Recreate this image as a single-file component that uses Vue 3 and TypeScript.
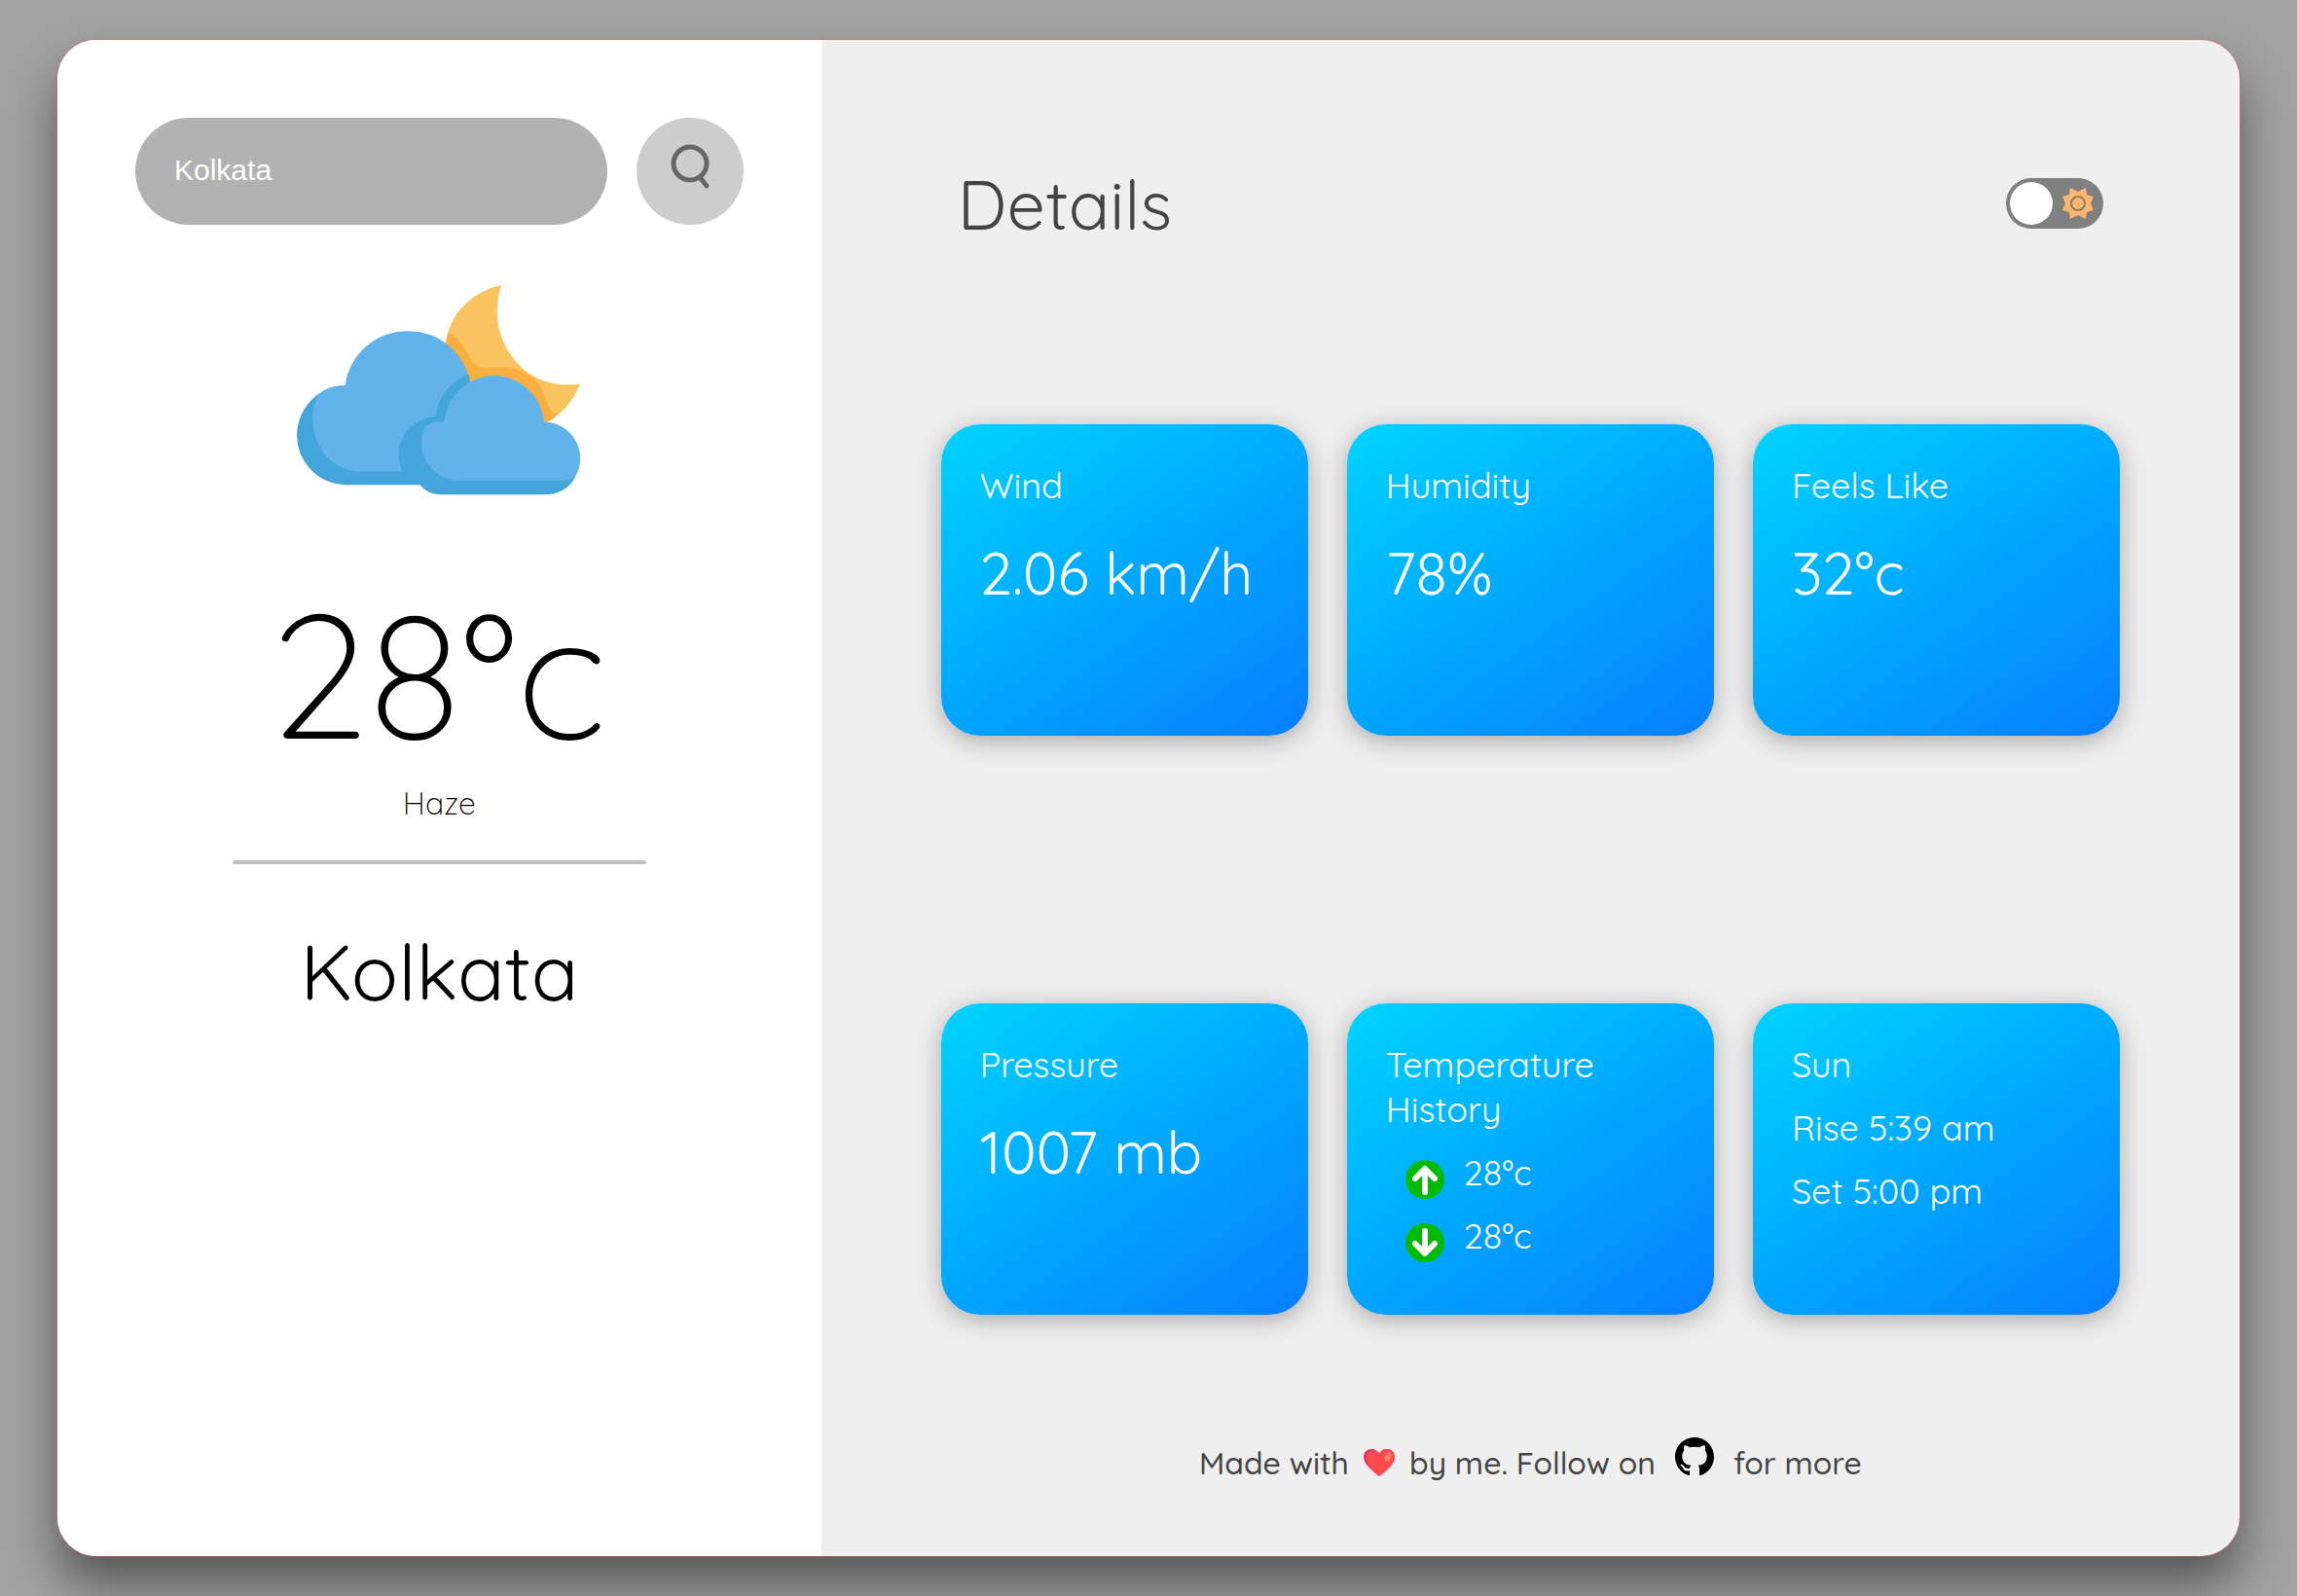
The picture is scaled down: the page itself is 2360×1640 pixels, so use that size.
<script setup lang="ts">
import { ref } from 'vue'

interface Reading {
  title: string
  value?: string
  range?: { dir: 'up' | 'down'; temp: string }[]
  lines?: string[]
}

const city = ref('Kolkata')
const dark = ref(false)

const readings: Reading[] = [
  { title: 'Wind', value: '2.06 km/h' },
  { title: 'Humidity', value: '78%' },
  { title: 'Feels Like', value: '32°c' },
  { title: 'Pressure', value: '1007 mb' },
  {
    title: 'Temperature History',
    range: [
      { dir: 'up', temp: '28°c' },
      { dir: 'down', temp: '28°c' },
    ],
  },
  { title: 'Sun', lines: ['Rise 5:39 am', 'Set 5:00 pm'] },
]
</script>

<template>
  <div class="page">
    <main class="shell">
      <section class="summary">
        <form class="search" @submit.prevent>
          <input v-model="city" class="search-input" type="text" aria-label="City" />
          <button class="search-button" type="submit" aria-label="Search">
            <svg viewBox="0 0 40 40" width="40" height="40" aria-hidden="true">
              <circle cx="20" cy="12" r="17" />
              <path d="M30 26 L37 35" />
            </svg>
          </button>
        </form>

        <svg class="weather" viewBox="75 68 874 650" role="img" aria-label="Cloudy night">
          <path fill="#f9c45f" d="M705 68 C676 160 694 252 770 325 C820 370 884 381 948 374 C934 412 906 450 880 468 L843 491 L600 380 L534 245 C546 150 620 88 705 68Z" />
          <path fill="#f9ae40" d="M541 215 C570 228 585 250 601 282 C617 312 632 328 665 325 C720 318 770 325 806 358 C845 396 840 455 880 468 C868 480 856 487 843 493 L600 400 L532 250Z" />
          <path fill="#43a5d9" d="M222 378 A154 154 0 0 0 232 686 H460 L400 378Z" />
          <path fill="#61b3ea" d="M222 378 A193 193 0 0 1 414 210 A193 193 0 0 1 607 365 L560 644 H262 C186 640 126 575 122 490 C120 460 126 428 143 402 C165 386 190 378 222 378Z" />
          <path fill="#43a5d9" d="M605 344 C548 364 506 416 502 475 C440 476 388 528 388 592 C388 615 393 630 400 644 L450 683 C470 705 490 716 520 716 H838 C880 716 915 698 934 660 L620 500Z" />
          <path fill="#61b3ea" d="M528 491 H508 C470 491 458 520 458 560 C460 622 510 670 570 672 H890 C908 672 924 668 934 660 A113 113 0 0 0 836 491 A155 155 0 0 0 685 348 A157 157 0 0 0 528 491Z" />
        </svg>

        <p class="temperature">28°c</p>
        <p class="condition">Haze</p>
        <hr class="divider" />
        <h1 class="city">Kolkata</h1>
      </section>

      <section class="details">
        <header class="details-head">
          <h2 class="details-title">Details</h2>
          <label class="theme">
            <input v-model="dark" class="theme-input" type="checkbox" aria-label="Dark theme" />
            <svg class="theme-sun" viewBox="-17 -17 34 34" aria-hidden="true">
              <path d="M0 -12 L8 -16 L9 -9 L16 -7 L13 0 L16 7 L9 9 L8 16 L0 12 L-8 16 L-9 9 L-16 7 L-13 0 L-16 -7 L-9 -9 L-8 -16Z" />
              <circle r="7" />
            </svg>
          </label>
        </header>

        <div class="cards">
          <article v-for="item in readings" :key="item.title" class="card">
            <h3 class="card-title">{{ item.title }}</h3>
            <p v-if="item.value" class="card-value">{{ item.value }}</p>
            <div v-for="row in item.range" :key="row.dir" class="card-range">
              <svg viewBox="0 0 40 40" width="40" height="40" aria-hidden="true">
                <circle cx="20" cy="20" r="20" />
                <path v-if="row.dir === 'up'" d="M20 33 V9 M10 19 L20 9 L30 19" />
                <path v-else d="M20 8 V31 M10 21 L20 31 L30 21" />
              </svg>
              <span>{{ row.temp }}</span>
            </div>
            <p v-for="line in item.lines" :key="line" class="card-line">{{ line }}</p>
          </article>
        </div>

        <footer class="credit">
          <span>Made with</span>
          <svg class="heart" viewBox="0 0 32 28" role="img" aria-label="love">
            <path fill="#e0336b" d="M16 28 C10 23 0 16 0 8 C0 3 4 0 8 0 C12 0 15 2 16 5 C17 2 20 0 24 0 C28 0 32 3 32 8 C32 16 22 23 16 28Z" />
            <path fill="#fb4b4e" d="M16 28 C11 24 3 17 3 9 C3 4 7 1 10 1 C13 1 15 3 16 6 C17 3 20 0 24 0 C28 0 32 3 32 8 C32 16 22 23 16 28Z" />
            <ellipse cx="25" cy="8" rx="3" ry="5" fill="#ff8071" transform="rotate(25 25 8)" />
          </svg>
          <span>by me. Follow on</span>
          <a class="github" href="https://github.com" aria-label="GitHub">
            <svg viewBox="0 0 16 16" width="40" height="40" aria-hidden="true">
              <path d="M8 0C3.580 0 0 3.580 0 8c0 3.540 2.290 6.530 5.470 7.590.4.070.55-.17.55-.38 0-.19-.01-.82-.01-1.490-2.010.37-2.530-.49-2.690-.94-.09-.23-.48-.94-.82-1.130-.28-.15-.68-.52-.01-.53.63-.01 1.080.58 1.230.82.72 1.210 1.870.87 2.330.66.07-.52.28-.87.51-1.070-1.780-.2-3.640-.89-3.640-3.950 0-.87.31-1.590.82-2.150-.08-.2-.36-1.020.08-2.120 0 0 .67-.21 2.200.82.64-.18 1.320-.27 2-.27s1.360.09 2 .27c1.530-1.040 2.200-.82 2.200-.82.44 1.100.16 1.920.08 2.120.51.56.82 1.270.82 2.150 0 3.070-1.870 3.750-3.650 3.950.29.25.54.73.54 1.480 0 1.070-.01 1.930-.01 2.200 0 .21.15.46.55.38A8.010 8.010 0 0 0 16 8c0-4.420-3.580-8-8-8z" />
            </svg>
          </a>
          <span>for more</span>
        </footer>
      </section>
    </main>
  </div>
</template>

<style>
body {
  background: #a2a2a2;
}
</style>

<style scoped>
* {
  box-sizing: border-box;
  margin: 0;
}

.page {
  display: flex;
  align-items: center;
  justify-content: center;
  min-height: 100vh;
  font-family: Quicksand, Lato, sans-serif;
  font-weight: 400;
}

.shell {
  display: flex;
  width: 95%;
  min-height: 95vh;
  border-radius: 40px;
  overflow: hidden;
  background: #efefef;
  box-shadow:
    0 0 0 1px rgba(220, 100, 100, 0.4),
    0 30px 50px rgba(0, 0, 0, 0.46);
}

.summary {
  display: flex;
  flex-direction: column;
  align-items: center;
  width: 35%;
  padding: 80px;
  background: #fff;
  color: #000;
}

.search {
  display: flex;
  gap: 30px;
  width: 100%;
}

.search-input {
  flex: 1;
  min-width: 0;
  height: 110px;
  padding: 0 40px 2px;
  border: 0;
  border-radius: 55px;
  background: #b2b2b2;
  color: #fff;
  font: 30px "Liberation Sans", Arial, sans-serif;
}

.search-button {
  display: flex;
  align-items: center;
  justify-content: center;
  width: 110px;
  height: 110px;
  padding: 0;
  border: 0;
  border-radius: 50%;
  background: #cdcdcd;
}

.search-button svg {
  overflow: visible;
  fill: none;
  stroke: #666;
  stroke-width: 5;
  stroke-linecap: round;
}

.weather {
  width: 292px;
  height: 216px;
  margin-top: 62px;
  overflow: visible;
}

.temperature {
  margin-top: 75px;
  font-size: 180px;
  font-weight: 300;
  line-height: 216px;
}

.condition {
  font-size: 32px;
  font-weight: 300;
  line-height: 50px;
}

.divider {
  width: 68%;
  height: 4px;
  margin-top: 34px;
  border: 0;
  border-radius: 2px;
  background: #c0c0c0;
}

.city {
  margin-top: 60px;
  font-size: 80px;
  font-weight: 400;
  line-height: 100px;
}

.details {
  display: flex;
  flex: 1;
  flex-direction: column;
  padding: 120px 123px 81px;
  color: #444;
}

.details-head {
  display: flex;
  align-items: center;
  justify-content: space-between;
  height: 96px;
  padding: 0 17px;
}

.details-title {
  padding-top: 2px;
  font-size: 70px;
  font-weight: 400;
}

.theme {
  position: relative;
  display: flex;
}

.theme-input {
  display: flex;
  align-items: center;
  width: 100px;
  height: 52px;
  margin: 0;
  padding: 4px;
  border-radius: 26px;
  appearance: none;
  background: #808080;
}

.theme-input::before {
  width: 44px;
  height: 44px;
  border-radius: 50%;
  background: #fff;
  content: "";
}

.theme-input:checked {
  justify-content: flex-end;
}

.theme-sun {
  position: absolute;
  top: 9px;
  right: 9px;
  width: 34px;
  height: 34px;
  fill: #ffb66e;
}

.theme-sun circle {
  fill: none;
  stroke: #8c7a68;
  stroke-width: 2;
}

.cards {
  display: grid;
  flex: 1;
  grid-template-columns: repeat(3, 1fr);
  gap: 0 40px;
  align-content: space-around;
  margin-top: 41px;
}

.card {
  min-height: 320px;
  padding: 40px;
  border-radius: 40px;
  background: linear-gradient(145deg, #00d4ff, #00a8ff 50%, #087eff);
  color: #fff;
  box-shadow: 0 5px 26px rgba(0, 0, 0, 0.3);
}

.card-title {
  font-size: 36px;
  font-weight: 400;
  line-height: 46px;
}

.card-value {
  margin-top: 29px;
  font-size: 60px;
  line-height: 76px;
}

.card-line {
  margin-top: 19px;
  font-size: 36px;
  line-height: 46px;
}

.card-range {
  display: flex;
  gap: 20px;
  align-items: flex-end;
  height: 46px;
  margin-top: 19px;
  padding-left: 20px;
  font-size: 36px;
  line-height: 46px;
}

.card-range svg {
  margin-bottom: -4px;
}

.card-range circle {
  fill: #0b0;
}

.card-range path {
  fill: none;
  stroke: #fff;
  stroke-width: 6;
  stroke-linecap: round;
  stroke-linejoin: round;
}

.credit {
  display: flex;
  align-items: center;
  justify-content: center;
  height: 30px;
  font-size: 32px;
  font-weight: 500;
  line-height: 40px;
}

.heart {
  width: 32px;
  height: 28px;
  margin: 0 15px;
}

.github {
  display: flex;
  margin: 0 20px 12px;
}
</style>
